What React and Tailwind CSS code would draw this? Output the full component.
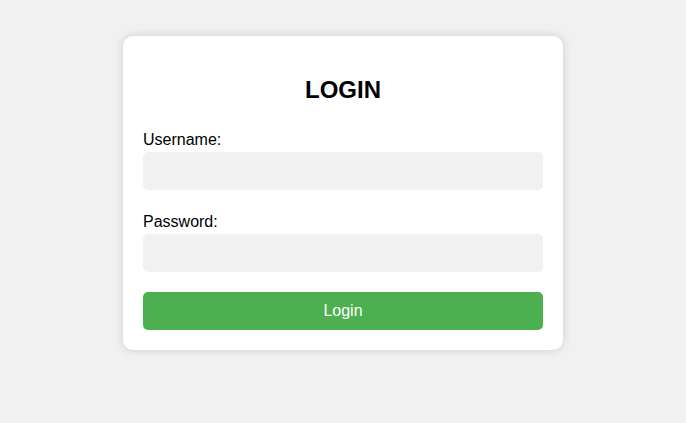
import React from 'react';

export default function App() {
  return (
    <div className="min-h-screen bg-[#f1f1f1] pt-[36px] font-['Liberation_Sans',Arial,sans-serif] text-black">
      <div className="mx-auto w-[440px] rounded-[10px] bg-white p-[20px] shadow-[0_0_10px_rgba(0,0,0,0.15)]">
        <h2 className="mt-[20px] mb-0 text-center text-[24px] font-bold leading-[28px]">LOGIN</h2>

        <form className="mt-[27px]" onSubmit={(e) => e.preventDefault()}>
          <label className="block text-[16px] leading-[18px] mb-[3px]">Username:</label>
          <input type="text" className="block h-[38px] w-full rounded-[5px] border-0 bg-[#f1f1f1] px-[10px] outline-none" />

          <label className="mt-[23px] block text-[16px] leading-[18px] mb-[3px]">Password:</label>
          <input type="password" className="block h-[38px] w-full rounded-[5px] border-0 bg-[#f1f1f1] px-[10px] outline-none" />

          <button
            type="submit"
            className="mt-[20px] block h-[38px] w-full rounded-[5px] bg-[#4caf50] text-[16px] text-white"
          >
            Login
          </button>
        </form>
      </div>
    </div>
  );
}
